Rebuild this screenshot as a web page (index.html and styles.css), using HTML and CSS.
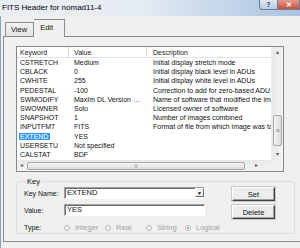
FILE: index.html
```html
<!DOCTYPE html>
<html>
<head>
<title>FITS Header for nomad11-4</title>
<meta charset="UTF-8">
<link rel="stylesheet" href="styles.css">
</head>
<body>

<!-- TITLE BAR -->
<div class="titlebar">
	<span class="title">FITS Header for nomad11-4</span>
	<div class="caption-btns">
		<span class="cap-help">?</span>
		<span class="cap-close">&#x2715;</span>
	</div>
</div>

<div class="frame">
	<div class="frame-edge"></div>
	<div class="client">

		<!-- TABS -->
		<div class="tabs">
			<div class="tab">View</div>
			<div class="tab active">Edit</div>
		</div>

		<div class="panel">

			<!-- KEYWORD LIST -->
			<div class="list">
				<div class="list-main">
					<div class="row head">
						<span>Keyword</span>
						<span>Value</span>
						<span>Description</span>
					</div>
					<div class="row"><span>CSTRETCH</span><span>Medium</span><span>Initial display stretch mode</span></div>
					<div class="row"><span>CBLACK</span><span>0</span><span>Initial display black level in ADUs</span></div>
					<div class="row"><span>CWHITE</span><span>255</span><span>Initial display white level in ADUs</span></div>
					<div class="row"><span>PEDESTAL</span><span>-100</span><span>Correction to add for zero-based ADU</span></div>
					<div class="row"><span>SWMODIFY</span><span>MaxIm DL Version 4.62</span><span>Name of software that modified the image</span></div>
					<div class="row"><span>SWOWNER</span><span>Solo</span><span>Licensed owner of software</span></div>
					<div class="row"><span>SNAPSHOT</span><span>1</span><span>Number of images combined</span></div>
					<div class="row"><span>INPUTFMT</span><span>FITS</span><span>Format of file from which image was taken</span></div>
					<div class="row"><span><b class="sel">EXTEND</b></span><span>YES</span><span></span></div>
					<div class="row"><span>USERSETU</span><span>Not specified</span><span></span></div>
					<div class="row"><span>CALSTAT</span><span>BDF</span><span></span></div>
				</div>

				<div class="vscroll">
					<span class="arrow">&#x25B4;</span>
					<div class="vtrack"><div class="vthumb">&#x2261;</div></div>
					<span class="arrow">&#x25BE;</span>
				</div>

				<div class="hscroll">
					<span class="arrow">&#x25C2;</span>
					<div class="hthumb"><span>|||</span></div>
					<span class="arrow">&#x25B8;</span>
				</div>
				<div class="corner"></div>
			</div>

			<!-- KEY GROUP -->
			<fieldset class="keybox">
				<legend>Key</legend>
				<div class="key-fields">
					<label>Key Name:</label>
					<div class="combo">
						<span class="combo-text">EXTEND</span>
						<span class="combo-btn">&#x25BC;</span>
					</div>

					<label>Value:</label>
					<div class="textbox">YES</div>

					<label class="type-label">Type:</label>
					<div class="radios">
						<span class="radio"><i></i>Integer</span>
						<span class="radio"><i></i>Real</span>
						<span class="radio"><i></i>String</span>
						<span class="radio checked"><i></i>Logical</span>
					</div>
				</div>

				<div class="key-btns">
					<button class="btn">Set</button>
					<button class="btn">Delete</button>
				</div>
			</fieldset>

		</div>
	</div>
</div>

</body>
</html>
```

FILE: styles.css
```css
body{
	margin: 0px;
	width: 300px;
	height: 248px;
	overflow: hidden;
	background: #f0f0f0;
	font-family: "Liberation Sans", Arial, sans-serif;
	font-size: 7px;
	color: #111;
}

/*********************************************************
TITLE BAR
**********************************************************/

.titlebar{
	height: 16px;
	display: flex;
	align-items: flex-start;
	background: linear-gradient(to right, #eaeff5 0%, #e6ecf3 45%, #c4d6ea 75%, #a9c3e1 100%);
}

.title{
	font-size: 8px;
	padding: 3px 0 0 2px;
	color: #000;
}

.caption-btns{
	margin-left: auto;
	display: flex;
}

.cap-help,
.cap-close{
	height: 9px;
	line-height: 9px;
	text-align: center;
	font-size: 7px;
	font-weight: bold;
	border: 1px solid #6d7f96;
	border-top: none;
}

.cap-help{
	width: 17px;
	color: #2d3c52;
	border-radius: 0 0 0 3px;
	background: linear-gradient(#dfe8f3, #b8cbe2);
}

.cap-close{
	width: 21px;
	color: #fff;
	border-left: none;
	background: linear-gradient(#e49a8c, #c7503a);
}

/*********************************************************
FRAME + TABS
**********************************************************/

.frame{
	display: flex;
	height: 232px;
}

.frame-edge{
	width: 4px;
	background: #b3c5da;
	border-right: 1px solid #8fa3bb;
}

.client{
	flex: 1;
	padding-left: 2px;
}

.tabs{
	display: flex;
	align-items: flex-end;
	height: 20px;
	padding-left: 2px;
}

.tab{
	height: 13px;
	line-height: 13px;
	padding: 0 6px 0 5px;
	border: 1px solid #898c95;
	border-bottom: none;
	background: linear-gradient(#f2f2f2, #e3e3e3);
	font-size: 7.5px;
	margin-bottom: 0;
}

.tab.active{
	height: 17px;
	line-height: 15px;
	padding: 0 11px 0 6px;
	background: #f0f0f0;
	margin-bottom: -1px;
	position: relative;
	border-left: none;
}

.panel{
	border: 1px solid #898c95;
	width: 300px;
	height: 206px;
	padding: 9px 0 0 12px;
	box-sizing: border-box;
}

/*********************************************************
LIST VIEW
**********************************************************/

.list{
	width: 268px;
	height: 126px;
	box-sizing: border-box;
	border: 1px solid #828790;
	background: #fff;
	display: grid;
	grid-template-columns: 254px 12px;
	grid-template-rows: 113px 11px;
}

.list-main{
	overflow: hidden;
}

.row{
	display: grid;
	grid-template-columns: 52px 78px 300px;
	height: 9.2px;
	line-height: 9.2px;
	white-space: nowrap;
}

.row span{
	overflow: hidden;
	padding-left: 3px;
}

.row span:nth-child(2){
	padding-left: 5px;
	padding-right: 6px;
	text-overflow: ellipsis;
}

.row span:nth-child(3){
	padding-left: 6px;
	overflow: visible;
}

.row.head{
	height: 11px;
	line-height: 11px;
	border-bottom: 1px solid #e3e4e6;
	box-sizing: border-box;
	color: #222;
}

.row.head span{
	border-right: 1px solid #d8dade;
}

.sel{
	font-weight: normal;
	background: #3399ff;
	color: #fff;
	padding: 0 2px 0 1px;
	margin-left: -1px;
}

.vscroll{
	grid-row: 1;
	grid-column: 2;
	display: flex;
	flex-direction: column;
	align-items: center;
	background: linear-gradient(to right, #e8e8e8, #f4f4f4);
	border-left: 1px solid #eee;
}

.arrow{
	font-size: 6px;
	color: #5a5a5a;
	line-height: 11px;
	height: 11px;
}

.vtrack{
	flex: 1;
	width: 100%;
	display: flex;
	flex-direction: column;
	justify-content: flex-end;
	padding-bottom: 3px;
	box-sizing: border-box;
}

.vthumb{
	height: 29px;
	margin: 0 1px 0 1px;
	border: 1px solid #a8a8a8;
	border-radius: 2px;
	background: linear-gradient(to right, #f4f4f4, #dcdcdc);
	font-size: 7px;
	color: #777;
	text-align: center;
	line-height: 29px;
}

.hscroll{
	grid-row: 2;
	grid-column: 1;
	display: flex;
	align-items: center;
	padding: 0 4px 0 3px;
	background: linear-gradient(#e8e8e8, #f4f4f4);
}

.hthumb{
	width: 218px;
	height: 8px;
	margin: 0 10px 0 4px;
	border: 1px solid #a8a8a8;
	border-radius: 2px;
	background: linear-gradient(#f4f4f4, #dcdcdc);
	box-sizing: border-box;
	text-align: center;
	font-size: 4px;
	line-height: 6px;
	color: #777;
}

.corner{
	grid-row: 2;
	grid-column: 2;
	background: #f0f0f0;
}

/*********************************************************
KEY GROUP
**********************************************************/

.keybox{
	margin: 5px 0 0 0;
	padding: 1px 0 2px 7px;
	width: 279px;
	box-sizing: border-box;
	border: 1px solid #d5dfe5;
	border-radius: 3px;
	display: flex;
	align-items: flex-start;
}

.keybox legend{
	padding: 0 1px;
	margin-left: 2px;
	font-size: 7.5px;
	line-height: 9px;
}

.key-fields{
	display: grid;
	grid-template-columns: 40px 141px;
	grid-template-rows: 12px 12px 10px;
	row-gap: 5px;
	align-items: center;
}

.key-fields label{
	font-size: 7px;
}

.type-label{
	margin-top: 3px;
}

.combo,
.textbox{
	height: 12px;
	box-sizing: border-box;
	background: #fff;
	border: 1px solid;
	border-color: #a0a0a0 #fff #fff #a0a0a0;
	box-shadow: inset 1px 1px #6a6a6a;
	font-size: 7.5px;
	line-height: 10px;
	padding-left: 2px;
}

.combo{
	display: flex;
}

.combo-text{
	flex: 1;
}

.combo-btn{
	width: 9px;
	height: 9px;
	margin: 0 0 0 0;
	font-size: 5px;
	line-height: 9px;
	text-align: center;
	background: #f0f0f0;
	border: 1px solid;
	border-color: #fff #6a6a6a #6a6a6a #fff;
	box-sizing: border-box;
}

.radios{
	display: grid;
	grid-template-columns: 41px 41px 39px auto;
	margin-top: 3px;
	color: #a3a3a3;
}

.radio{
	display: flex;
	align-items: center;
	font-size: 7.5px;
}

.radio i{
	width: 6px;
	height: 6px;
	border: 1px solid #b9b9b9;
	border-radius: 50%;
	box-sizing: border-box;
	margin-right: 5px;
	background: #f4f4f4;
	display: inline-flex;
	align-items: center;
	justify-content: center;
}

.radio.checked i::after{
	content: '';
	width: 2px;
	height: 2px;
	border-radius: 50%;
	background: #9a9a9a;
}

.key-btns{
	display: flex;
	flex-direction: column;
	gap: 4px;
	margin-left: 27px;
}

.btn{
	width: 43px;
	height: 14px;
	padding: 0;
	font-family: inherit;
	font-size: 7.5px;
	color: #111;
	background: #ececec;
	border: 1px solid;
	border-color: #fff #404040 #404040 #fff;
	box-shadow: inset -1px -1px #a0a0a0, 0 0 0 1px #c8c8c8;
}
```
